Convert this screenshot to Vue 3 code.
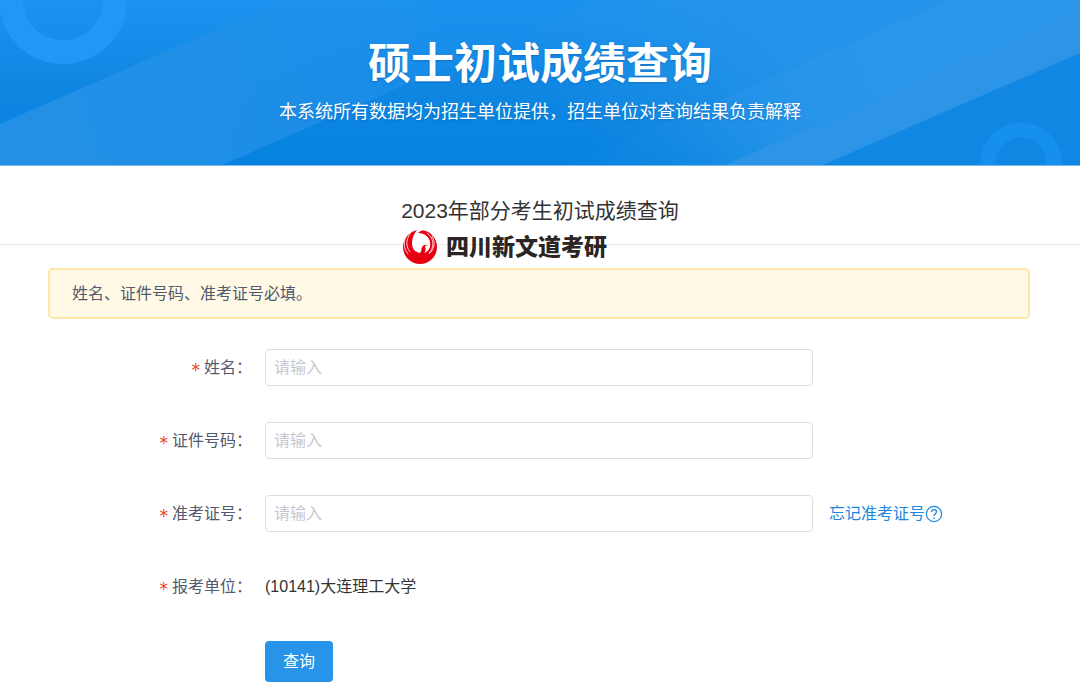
<template>
  <div class="page">
    <header class="banner">
      <svg class="banner-bg" viewBox="0 0 1080 165" preserveAspectRatio="none" aria-hidden="true">
        <defs>
          <linearGradient id="base" x1="0" y1="0" x2="0" y2="1">
            <stop offset="0" stop-color="#1b93f0" />
            <stop offset="0.5" stop-color="#0f87e3" />
            <stop offset="1" stop-color="#0582df" />
          </linearGradient>
          <linearGradient id="bandLeft" gradientUnits="userSpaceOnUse" x1="60" y1="165" x2="430" y2="0">
            <stop offset="0" stop-color="#2390e5" />
            <stop offset="0.6" stop-color="#2090e8" stop-opacity="0.8" />
            <stop offset="1" stop-color="#1d90ee" stop-opacity="0.4" />
          </linearGradient>
          <linearGradient id="bandMid" gradientUnits="userSpaceOnUse" x1="780" y1="20" x2="600" y2="165">
            <stop offset="0" stop-color="#2593e9" />
            <stop offset="1" stop-color="#2593e9" stop-opacity="0" />
          </linearGradient>
          <linearGradient id="bandRight" gradientUnits="userSpaceOnUse" x1="900" y1="40" x2="680" y2="140">
            <stop offset="0" stop-color="#2b96ea" />
            <stop offset="1" stop-color="#2b96ea" stop-opacity="0.1" />
          </linearGradient>
        </defs>
        <rect width="1080" height="165" fill="url(#base)" />
        <path d="M0 124 284 0H600L222 165H0Z" fill="url(#bandLeft)" />
        <path d="M600 0H1080V53L823 165H222Z" fill="url(#bandMid)" />
        <path d="M950 0H1080V53L823 165H570Z" fill="url(#bandRight)" />
        <path d="M1080 10V53L823 165H725Z" fill="#2c95e8" />
        <path d="M1080 53V165H823Z" fill="#1087e2" />
        <circle cx="63" cy="0" r="52" fill="none" stroke="#2197f8" stroke-width="24" />
        <circle cx="1021" cy="163" r="33" fill="none" stroke="#1590ee" stroke-width="15" />
      </svg>
      <h1 class="banner-title">硕士初试成绩查询</h1>
      <p class="banner-desc">本系统所有数据均为招生单位提供，招生单位对查询结果负责解释</p>
    </header>

    <div class="subject">
      <h2 class="subject-title">2023年部分考生初试成绩查询</h2>
      <div class="brand">
        <svg class="brand-logo" viewBox="0 0 36 36" aria-hidden="true">
          <circle cx="18" cy="18" r="17" fill="#e60012" />
          <path
            fill="#fff"
            d="M16 0C12 4 10 9 10 14c0 6 3 9 8 10 2-2 1-4 2-6 1-1 2-3 5-2l1 1c-2-1-3 0-3 1 1 2 1 4-1 6 5-2 7-6 6-11-1-5-5-9-12-9 2-2 4-3 7-3-2-1-4-1-7-1Z"
          />
          <path
            fill="none"
            stroke="#fff"
            stroke-width="0.8"
            d="M11 1C4 8 3 17 8 23M6 4C1 11 1 19 6 25M25 4c8 6 7 15 2 20M30 7c4 7 2 14-3 18"
          />
        </svg>
        <span class="brand-name">四川新文道考研</span>
      </div>
    </div>

    <main class="content">
      <div class="alert">姓名、证件号码、准考证号必填。</div>

      <form class="form" @submit.prevent>
        <div v-for="item in fields" :key="item.key" class="form-item">
          <label class="form-label" :for="item.key"><span class="required">*</span>{{ item.label }}：</label>
          <input :id="item.key" v-model="form[item.key]" class="form-input" type="text" placeholder="请输入" />
          <a v-if="item.key === 'ticket'" class="forget" href="#">
            忘记准考证号<svg class="help" viewBox="0 0 16 16" aria-hidden="true">
              <circle cx="8" cy="8" r="6.8" />
              <path d="M5.8 6.3c0-1.3 1-2.2 2.2-2.2s2.2.8 2.2 2c0 1.6-2.2 1.8-2.2 3.6" />
              <path d="M8 11.2v1.2" />
            </svg>
          </a>
        </div>

        <div class="form-item">
          <span class="form-label"><span class="required">*</span>报考单位：</span>
          <span class="form-text">(10141)大连理工大学</span>
        </div>

        <div class="form-item">
          <button class="submit" type="submit">查询</button>
        </div>
      </form>
    </main>
  </div>
</template>

<script setup>
import { reactive } from 'vue'

const fields = [
  { key: 'name', label: '姓名' },
  { key: 'idcard', label: '证件号码' },
  { key: 'ticket', label: '准考证号' },
]

const form = reactive({
  name: '',
  idcard: '',
  ticket: '',
})
</script>

<style>
body {
  margin: 0;
  background: #fff;
}
</style>

<style scoped>
.page {
  font-family: 'Liberation Sans', 'Noto Sans CJK SC', sans-serif;
  font-size: 16px;
  line-height: 24px;
  color: #333;
}

.banner {
  position: relative;
  box-sizing: border-box;
  height: 166px;
  padding-top: 34px;
  border-bottom: 1px solid #7dbcf0;
  color: #fff;
  text-align: center;
}

.banner-bg {
  position: absolute;
  inset: 0;
  width: 100%;
  height: 100%;
}

.banner-title,
.banner-desc {
  position: relative;
  margin: 0;
  text-shadow: 0 1px 2px rgba(0, 60, 130, 0.3);
}

.banner-title {
  font-size: 43px;
  font-weight: 700;
  line-height: 60px;
}

.banner-desc {
  margin-top: 6px;
  font-size: 18px;
  line-height: 24px;
}

.subject {
  position: relative;
  box-sizing: border-box;
  height: 79px;
  padding-top: 30px;
  border-bottom: 1px solid #e6e6e6;
}

.subject-title {
  margin: 0;
  font-size: 21px;
  font-weight: 400;
  line-height: 30px;
  text-align: center;
}

/* 品牌标识压在分隔线上 */
.brand {
  position: absolute;
  top: 62px;
  left: 50%;
  display: flex;
  align-items: center;
  gap: 8px;
  margin-left: -138px;
}

.brand-logo {
  width: 36px;
  height: 36px;
}

.brand-name {
  font-size: 23px;
  font-weight: 900;
  line-height: 38px;
  color: #2b2523;
  white-space: nowrap;
}

.content {
  padding: 23px 50px 8px 48px;
}

.alert {
  padding: 12px 22px;
  border: 2px solid #fee6a8;
  border-radius: 5px;
  background: #fff9e6;
  line-height: 23px;
  color: #515a6e;
}

.form {
  display: flex;
  flex-direction: column;
  gap: 36px;
  margin-top: 30px;
}

.form-item {
  display: grid;
  grid-template-columns: 204px minmax(0, 548px) auto;
  column-gap: 13px;
  align-items: center;
  justify-content: start;
  min-height: 37px;
}

.form-label {
  color: #515a6e;
  text-align: right;
}

.required {
  margin-right: 4px;
  font-family: 'DejaVu Sans', sans-serif;
  font-size: 17px;
  line-height: 16px;
  vertical-align: -3px;
  color: #ed4014;
}

.form-input {
  box-sizing: border-box;
  width: 100%;
  height: 37px;
  padding: 0 8px;
  border: 1px solid #dcdee2;
  border-radius: 4px;
  outline: none;
  font: inherit;
  color: #515a6e;
}

.form-input::placeholder {
  color: #c5c8ce;
  opacity: 1;
}

.form-input:focus {
  border-color: #2793e9;
}

.forget {
  display: flex;
  align-items: center;
  margin-left: 3px;
  color: #1c87e0;
  text-decoration: none;
  white-space: nowrap;
}

.help {
  width: 18px;
  height: 18px;
  fill: none;
  stroke: currentColor;
  stroke-width: 1.1;
}

.submit {
  grid-column: 2;
  justify-self: start;
  height: 41px;
  padding: 0 18px;
  border: 0;
  border-radius: 4px;
  background: #2793e9;
  font: inherit;
  color: #fff;
  cursor: pointer;
}
</style>
